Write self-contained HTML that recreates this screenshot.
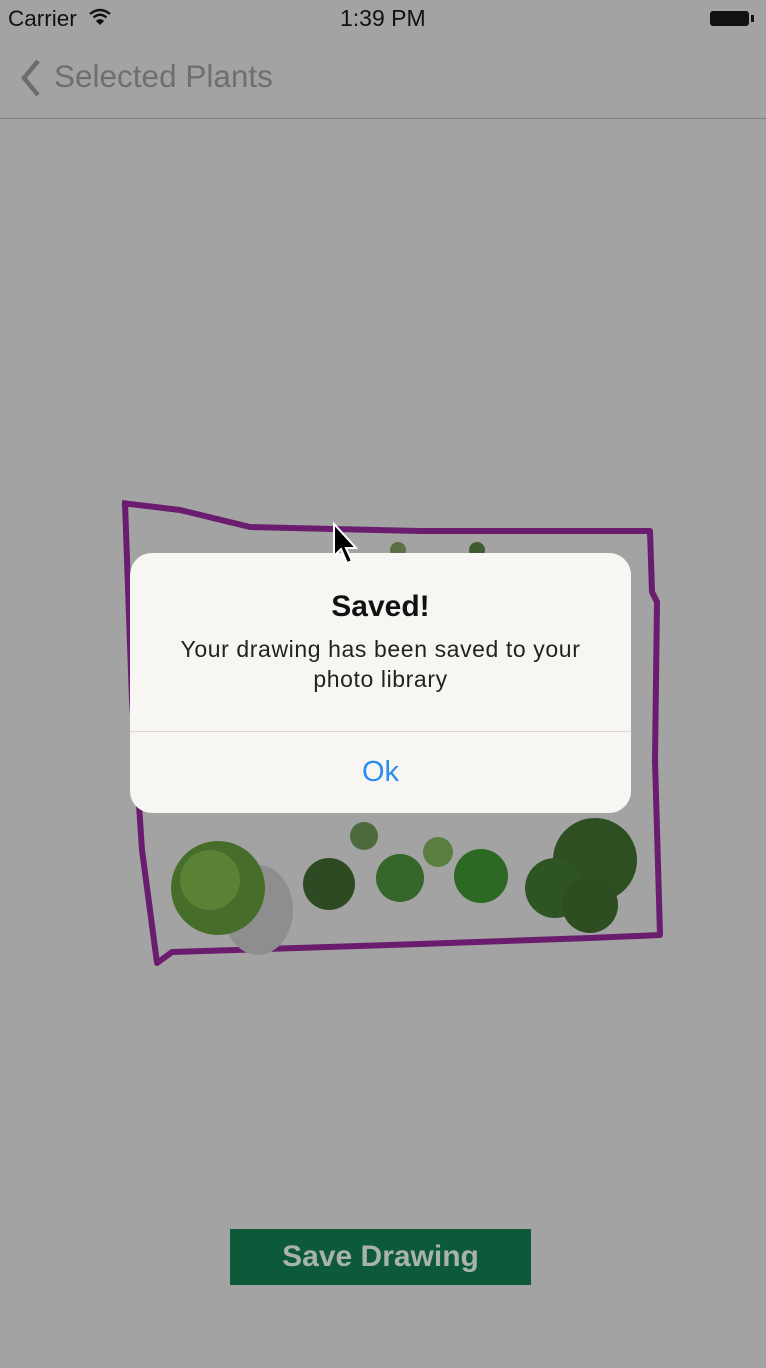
<!DOCTYPE html>
<html><head><meta charset="utf-8"><style>
body{margin:0;width:766px;height:1368px;background:#a3a3a3;position:relative;overflow:hidden;font-family:"Liberation Sans",sans-serif}
.a{position:absolute}
</style></head><body>
<div class="a" style="left:8px;top:6px;font-size:22.5px;color:#111">Carrier</div>
<svg class="a" style="left:88px;top:8px" width="24" height="18" viewBox="0 0 24 18"><path d="M2 6 Q12 -2 22 6" stroke="#111" stroke-width="2.4" fill="none"/><path d="M5.5 9.5 Q12 4 18.5 9.5" stroke="#111" stroke-width="2.4" fill="none"/><path d="M9 13 Q12 10.5 15 13 L12 16Z" fill="#111" stroke="#111" stroke-width="1.5"/></svg>
<div class="a" style="left:340px;top:5px;font-size:23px;color:#111">1:39 PM</div>
<div class="a" style="left:710px;top:11px;width:39px;height:15px;background:#111;border-radius:3px"></div>
<div class="a" style="left:751px;top:15px;width:3px;height:7px;background:#111"></div>
<svg class="a" style="left:16px;top:58px" width="28" height="40" viewBox="0 0 28 40"><path d="M22 3 L8 20 L22 37" stroke="#6c6c6c" stroke-width="4.5" fill="none"/></svg>
<div class="a" style="left:54px;top:58px;font-size:31.5px;color:#6f6f6f">Selected Plants</div>
<div class="a" style="left:0;top:118px;width:766px;height:1px;background:#7e7e7e"></div>
<svg class="a" style="left:0;top:0" width="766" height="1368">
<path d="M122 503 L180 510 L250 527 L420 531 L650 531 L652 592 L657 602 L655 760 L660 935 L590 938 L420 944 L172 952 L157 963 L142 850 L132 700 L125 503" stroke="#6a1c6e" stroke-width="6" fill="none" stroke-linejoin="round"/>
<ellipse cx="258" cy="910" rx="35" ry="45" fill="#8e8e8e"/>
<circle cx="218" cy="888" r="47" fill="#466e2a"/><circle cx="210" cy="880" r="30" fill="#5a8235"/>
<circle cx="329" cy="884" r="26" fill="#2e4a22"/>
<circle cx="400" cy="878" r="24" fill="#35662a"/>
<circle cx="481" cy="876" r="27" fill="#2c6a24"/>
<circle cx="364" cy="836" r="14" fill="#4d6a3c"/><circle cx="438" cy="852" r="15" fill="#5a7e40"/>
<circle cx="595" cy="860" r="42" fill="#2d4f22"/><circle cx="555" cy="888" r="30" fill="#2f5424"/><circle cx="590" cy="905" r="28" fill="#2c4e20"/>
<circle cx="398" cy="550" r="8" fill="#5a7045"/><circle cx="477" cy="550" r="8" fill="#3d5a30"/>
</svg>
<div class="a" style="left:130px;top:553px;width:501px;height:260px;background:#f8f6f2;border-radius:22px"></div>
<div class="a" style="left:130px;top:731px;width:501px;height:1px;background:#ddd6cf"></div>
<div class="a" style="left:130px;top:590px;width:501px;text-align:center;font-size:30px;font-weight:bold;color:#111">Saved!</div>
<div class="a" style="left:110px;top:634px;width:541px;text-align:center;font-size:23px;letter-spacing:0.6px;line-height:30px;color:#222">Your drawing has been saved to your<br>photo library</div>
<div class="a" style="left:130px;top:756px;width:501px;text-align:center;font-size:29px;color:#2a8cf0">Ok</div>
<svg class="a" style="left:331px;top:522px" width="32" height="48" viewBox="0 0 32 48"><path d="M3 2 L3 34 L10 27 L16 41 L21 39 L15 26 L25 26 Z" fill="#000" stroke="#fff" stroke-width="2"/></svg>
<div class="a" style="left:230px;top:1229px;width:301px;height:56px;background:#0c5a3a;color:#a9b3ab;font-size:30px;font-weight:bold;text-align:center;line-height:56px">Save Drawing</div>
</body></html>
